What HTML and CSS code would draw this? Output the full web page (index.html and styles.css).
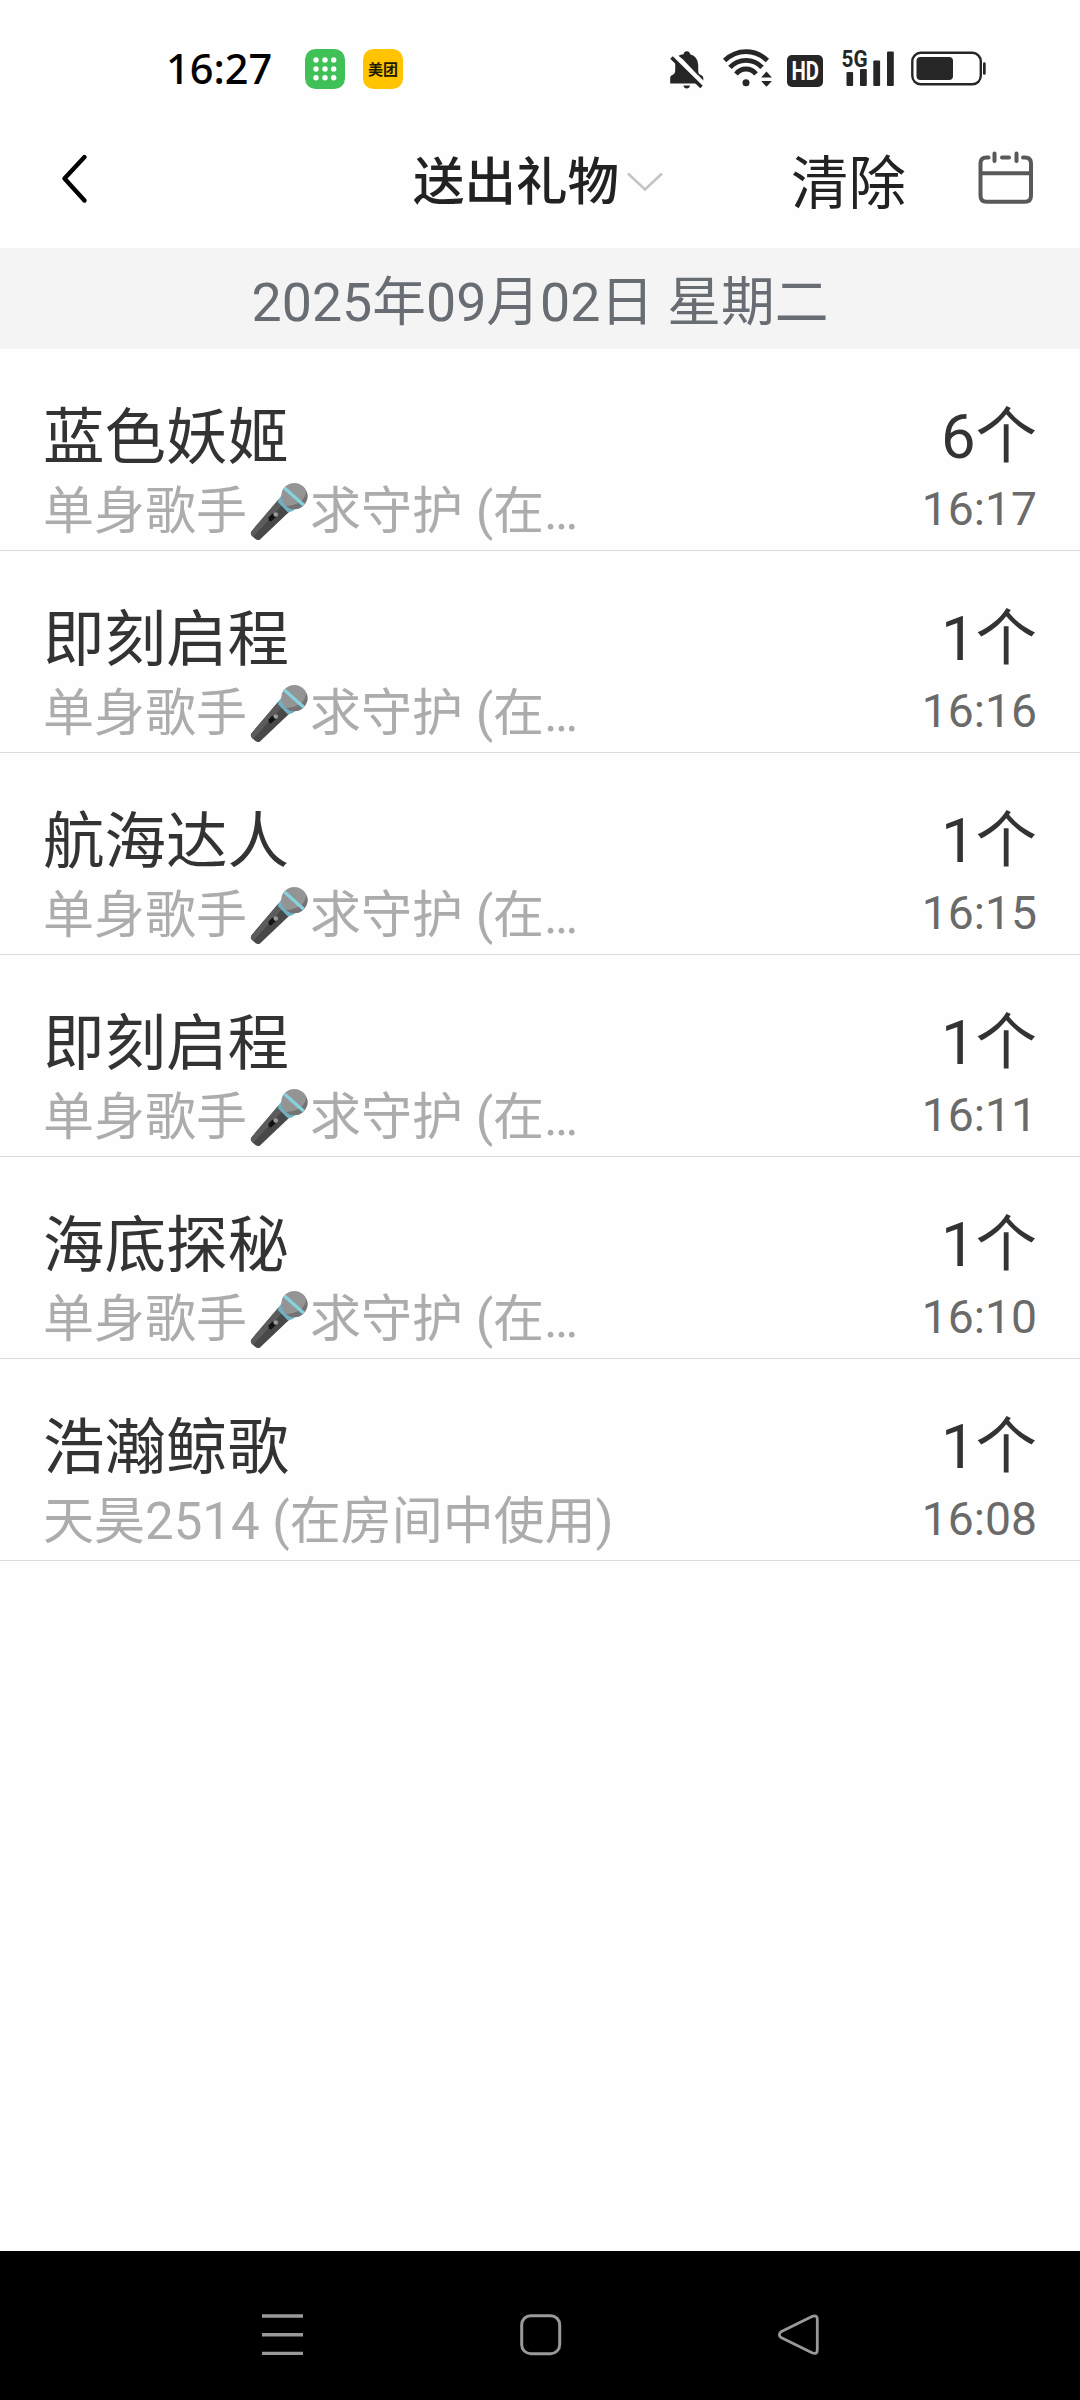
FILE: index.html
```html
<!DOCTYPE html>
<html lang="zh-CN">
<head>
<meta charset="utf-8">
<title>送出礼物</title>
<link rel="stylesheet" href="styles.css">
</head>
<body>
<svg class="defs" width="0" height="0" aria-hidden="true">
  <symbol id="mic" viewBox="0 0 58 58">
    <path d="M28.5 17.5 39.5 29.5 10 57.4Q7.600 59 4.800 56.500L1.700 53.400Q.2 51.600 1.400 49.400Z" fill="#484848"/>
    <path d="M28.500 17.500 33 22.300 3 55 1.700 53.400Q.2 51.600 1.400 49.400Z" fill="#5c5c5c"/>
    <path d="M18.600 35.400 22.400 31.600 26 35 21 39.500 18.600 38.500Z" fill="#111"/>
    <circle cx="25.800" cy="32.500" r="2.300" fill="#999"/>
    <path d="M31.500 13.500 45 27.500Q41 30.500 37.500 30L27.800 20Q28.500 16 31.500 13.500Z" fill="#6fb1c2"/>
    <circle cx="44.300" cy="14" r="13.100" fill="#949494"/>
    <path d="M56.500 9A13.100 13.100 0 0 1 36 24.200L43 23Q55 20 56.500 9Z" fill="#747474"/>
    <path d="M34.500 6 53.800 23.300" stroke="#86d2dd" stroke-width="3.200"/>
  </symbol>
</svg>
<div class="screen">
  <div class="status">
    <span class="clock">16:27</span>
    <svg class="app-grid" width="40" height="40" viewBox="0 0 40 40">
      <rect width="40" height="40" rx="10.500" fill="#3fc158"/>
      <g fill="#fff"><circle cx="11" cy="11" r="2.700"/><circle cx="20" cy="11" r="2.700"/><circle cx="28.700" cy="11" r="2.700"/><circle cx="11" cy="20" r="2.700"/><circle cx="20" cy="20" r="2.700"/><circle cx="28.700" cy="20" r="2.700"/><circle cx="11" cy="28.700" r="2.700"/><circle cx="20" cy="28.700" r="2.700"/><circle cx="28.700" cy="28.700" r="2.700"/></g>
    </svg>
    <span class="app-mt">美团</span>
    <svg class="bell" width="34" height="38" viewBox="0 0 34 38" fill="#262626">
      <path d="M13.500 3.200Q14 .2 16.800.2T20.200 3.200Q28 5.600 28.200 14V24.500L13 8.500 8.500 4.800Q10.500 3.500 13.500 3.200Z"/>
      <path d="M5.300 10.500 26.500 32.600H.2V26.500Q.3 24.300 3 23.700 5.200 23 5.200 20Z"/>
      <path d="M28.200 20Q28.200 23.500 31 24 33.300 24.800 33.300 27V29.500L28 24Z"/>
      <path d="M13.500 34.500H20Q19.500 37.500 16.700 37.500T13.500 34.500Z"/>
      <path d="M1.500 6.500 31.500 36" stroke="#262626" stroke-width="3.600"/>
    </svg>
    <svg class="wifi" width="50" height="38" viewBox="0 0 50 38">
      <g fill="none" stroke="#262626" stroke-width="4.800">
        <path d="M1.600 11.500Q11 2.600 23 2.600T44.400 11.500"/>
        <path d="M7 18.300Q13.500 11.300 23 11.300T39 18.300"/>
        <path d="M13 25Q17 20 23 20T33 25"/>
      </g>
      <circle cx="23" cy="33.700" r="3.500" fill="#262626"/>
      <path d="M38.200 28.500 43.500 22.500 48.900 28.500ZM38.200 32 43.500 37.800 48.900 32Z" fill="#262626"/>
    </svg>
    <svg class="hd" width="36" height="32" viewBox="0 0 36 32">
      <rect width="36" height="32" rx="5" fill="#262626"/>
      <text x="4.500" y="25" class="hd-text" textLength="27.500" lengthAdjust="spacingAndGlyphs">HD</text>
    </svg>
    <svg class="signal" width="53" height="38" viewBox="0 0 53 38" fill="#262626">
      <text x="-.5" y="18" class="net-text" textLength="26" lengthAdjust="spacingAndGlyphs">5G</text>
      <rect x="4.500" y="23" width="6.600" height="14" rx="1"/>
      <rect x="18" y="20" width="6.800" height="17" rx="1"/>
      <rect x="31.300" y="11.500" width="6.800" height="25.500" rx="1"/>
      <rect x="45" y="2.500" width="6.800" height="34.500" rx="1"/>
    </svg>
    <svg class="battery" width="75" height="35" viewBox="0 0 75 35">
      <rect x="1.300" y="1.800" width="68.500" height="31.500" rx="8.500" fill="none" stroke="#262626" stroke-width="2.400"/>
      <rect x="5.500" y="6" width="36.500" height="23" rx="4" fill="#262626"/>
      <rect x="72" y="11.300" width="2.700" height="12.500" rx="1.300" fill="#262626"/>
    </svg>
  </div>

  <header class="header">
    <svg class="back" width="28" height="52" viewBox="0 0 28 52" fill="none" stroke="#000" stroke-width="4.400" stroke-linecap="round" stroke-linejoin="round"><path d="M23.500 5 3.500 26.500 23.500 48.500"/></svg>
    <h1 class="title">送出礼物</h1>
    <svg class="chevron" width="36" height="20" viewBox="0 0 36 20" fill="none" stroke="#c4c4c4" stroke-width="2.600"><path d="M1 1.500 18 17.500 35 1.500"/></svg>
    <span class="clear">清除</span>
    <svg class="calendar" width="56" height="54" viewBox="0 0 56 54" fill="none" stroke="#595959" stroke-width="4" stroke-linecap="round">
      <path d="M10.500 6.500H8.500Q2.500 6.500 2.500 12.500V44.500Q2.500 50.800 8.500 50.800H47Q53 50.800 53 44.500V12.500Q53 6.500 47 6.500H45M24 6.500H31M16.500 2.500V10M38.500 2.500V10"/>
      <path d="M2.500 22.200H53" stroke-linecap="butt"/>
    </svg>
  </header>

  <div class="date">2025年09月02日 星期二</div>

  <main class="list">
    <div class="row"><div class="info"><div class="name">蓝色妖姬</div><div class="sub">单身歌手<svg class="mic"><use href="#mic"/></svg>求守护 (在…</div></div><div class="meta"><div class="count">6个</div><div class="time">16:17</div></div></div>
    <div class="row"><div class="info"><div class="name">即刻启程</div><div class="sub">单身歌手<svg class="mic"><use href="#mic"/></svg>求守护 (在…</div></div><div class="meta"><div class="count">1个</div><div class="time">16:16</div></div></div>
    <div class="row"><div class="info"><div class="name">航海达人</div><div class="sub">单身歌手<svg class="mic"><use href="#mic"/></svg>求守护 (在…</div></div><div class="meta"><div class="count">1个</div><div class="time">16:15</div></div></div>
    <div class="row"><div class="info"><div class="name">即刻启程</div><div class="sub">单身歌手<svg class="mic"><use href="#mic"/></svg>求守护 (在…</div></div><div class="meta"><div class="count">1个</div><div class="time">16:11</div></div></div>
    <div class="row"><div class="info"><div class="name">海底探秘</div><div class="sub">单身歌手<svg class="mic"><use href="#mic"/></svg>求守护 (在…</div></div><div class="meta"><div class="count">1个</div><div class="time">16:10</div></div></div>
    <div class="row"><div class="info"><div class="name">浩瀚鲸歌</div><div class="sub">天昊2514 (在房间中使用)</div></div><div class="meta"><div class="count">1个</div><div class="time">16:08</div></div></div>
  </main>

  <nav class="nav">
    <svg width="42" height="42" viewBox="0 0 42 42" stroke="#999" stroke-width="3.400"><path d="M0 2H41M0 20.700H41M0 39.400H41"/></svg>
    <svg width="42" height="42" viewBox="0 0 42 42" fill="none" stroke="#999" stroke-width="3"><rect x="1.700" y="1.700" width="38" height="38" rx="9"/></svg>
    <svg width="42" height="42" viewBox="0 0 42 42" fill="none" stroke="#999" stroke-width="2.800" stroke-linejoin="round"><path d="M3 17.800 34.500 2.300Q39.300.8 39.300 5.300V36Q39.300 40.600 34.500 39L3 23.500Q-.3 20.700 3 17.800Z"/></svg>
  </nav>
</div>
</body>
</html>
```
FILE: styles.css
```css
* {
  box-sizing: border-box;
}

body {
  margin: 0;
  background: #fefefe;
  font-family: Roboto, "Noto Sans CJK SC", sans-serif;
}

.defs {
  display: none;
}

.screen {
  display: flex;
  flex-direction: column;
  width: 1080px;
  height: 2400px;
  overflow: hidden;
}

svg {
  flex: none;
  overflow: visible;
}

/* Status bar */
.status {
  display: flex;
  align-items: flex-start;
  height: 110px;
  padding: 49px 0 0 166px;
}

.clock {
  width: 139px;
  margin-top: -2px;
  font: 500 41.500px/42px "Noto Sans", "Noto Sans CJK SC", sans-serif;
  color: #000;
}

.app-mt {
  width: 40px;
  height: 40px;
  margin-left: 18px;
  border-radius: 10.500px;
  background: #ffc300;
  color: #201a00;
  font: 700 15px/39px "Noto Sans CJK SC", sans-serif;
  text-align: center;
}

.bell {
  margin: 2px 0 0 267px;
}

.wifi {
  margin-left: 19px;
}

.hd {
  margin: 6px 0 0 14px;
}

.hd-text {
  fill: #fff;
  font: 700 25px Roboto, sans-serif;
}

.signal {
  margin-left: 19px;
}

.net-text {
  font: 700 24px Roboto, sans-serif;
}

.battery {
  margin: 2px 0 0 16px;
}

/* Title bar */
.header {
  display: flex;
  align-items: flex-start;
  height: 138px;
  background: #fefefe;
}

.back {
  margin: 42px 0 0 61px;
}

.title {
  width: 206px;
  margin: 31px 0 0 324px;
  font: 500 51.500px/74px "Noto Sans CJK SC", sans-serif;
  color: #222;
  white-space: nowrap;
}

.chevron {
  margin: 62px 0 0 8px;
}

.clear {
  width: 116px;
  margin: 31px 0 0 128px;
  font: 400 57.500px/76px "Noto Sans CJK SC", sans-serif;
  color: #222;
  white-space: nowrap;
}

.calendar {
  margin: 41px 0 0 71px;
}

.date {
  height: 101px;
  padding-top: 8px;
  background: #f4f4f4;
  color: #676d73;
  font-size: 53.700px;
  line-height: 93px;
  text-align: center;
}

/* Gift records */
.row {
  display: flex;
  justify-content: space-between;
  height: 202px;
  padding: 52px 43px 0;
  border-bottom: 1px solid #dcdcdc;
  white-space: nowrap;
}

.name,
.count {
  height: 72px;
  font-size: 61.500px;
  line-height: 72px;
  color: #333;
}

.name {
  line-height: 74px;
}

.sub {
  height: 60px;
  margin-top: 9px;
  font-size: 51px;
  line-height: 60px;
  color: #acacac;
}

.mic {
  width: 58px;
  height: 58px;
  margin: 0 2px 0 3px;
  vertical-align: -11px;
}

.meta {
  text-align: right;
}

.time {
  height: 60px;
  margin-top: 6px;
  font-size: 46.300px;
  line-height: 60px;
  color: #6a6a6a;
}

/* System navigation */
.nav {
  display: flex;
  gap: 216px;
  height: 149px;
  margin-top: auto;
  padding: 63px 0 0 262px;
  background: #000;
}
```
